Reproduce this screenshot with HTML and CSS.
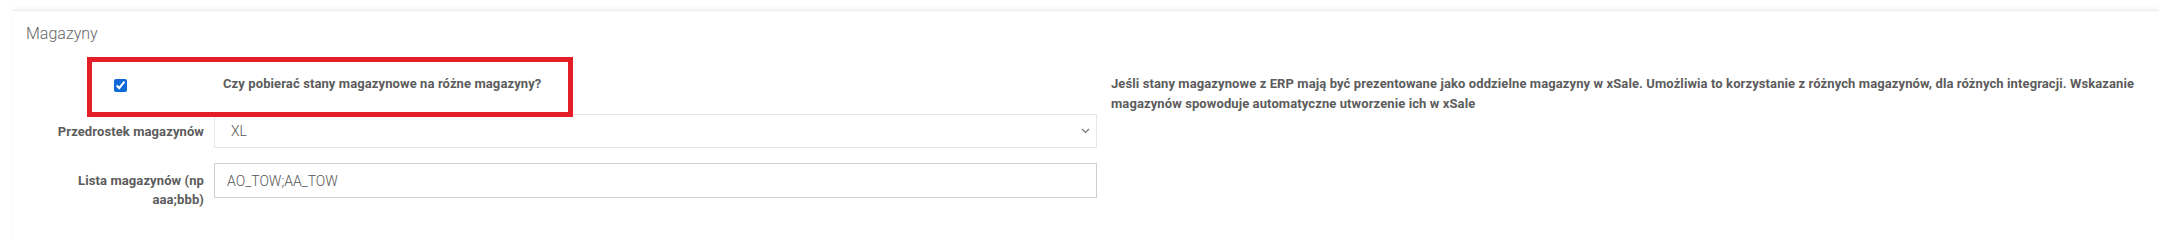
FILE: index.html
```
<!DOCTYPE html>
<html lang="pl">
<head>
  <meta charset="UTF-8">
  <meta name="viewport" content="width=device-width, initial-scale=1.0">
  <title>Magazyny</title>
  <link rel="stylesheet" href="styles.css">
</head>
<body>
  <div class="panel">
    <div class="panel-heading">Magazyny</div>

    <div class="form-row form-row-check">
      <div class="form-label">
        <input type="checkbox" id="multi-stock" checked>
      </div>
      <div class="form-field">
        <label class="check-label" for="multi-stock">Czy pobierać stany magazynowe na różne magazyny?</label>
      </div>
      <div class="form-help">
        Jeśli stany magazynowe z ERP mają być prezentowane jako oddzielne magazyny w xSale. Umożliwia to korzystanie z różnych magazynów, dla różnych integracji. Wskazanie magazynów spowoduje automatyczne utworzenie ich w xSale
      </div>
      <div class="highlight"></div>
    </div>

    <div class="form-row">
      <label class="form-label" for="prefix">Przedrostek magazynów</label>
      <div class="form-field">
        <div class="select">
          <span>XL</span>
          <svg width="9" height="6" viewBox="0 0 9 6"><path d="M1 1l3.5 3.5L8 1" fill="none" stroke="#777" stroke-width="1.2"/></svg>
        </div>
      </div>
    </div>

    <div class="form-row">
      <label class="form-label" for="list">Lista magazynów (np aaa;bbb)</label>
      <div class="form-field">
        <input type="text" id="list" class="text-input" value="AO_TOW;AA_TOW">
      </div>
    </div>
  </div>
</body>
</html>
```

FILE: styles.css
```
body {
  margin: 0;
  padding: 0;
  background-color: #fff;
  font-family: Roboto, 'Liberation Sans', sans-serif;
}

.panel {
  margin: 10px 0 0 12px;
  padding: 11px 0 20px 14px;
  border-top: 1px solid #ececec;
  box-shadow: 0 -3px 4px rgba(0, 0, 0, 0.03);
}

.panel-heading {
  font-size: 16px;
  line-height: 24px;
  font-weight: 300;
  color: #666;
  margin-bottom: 28px;
}

.form-row {
  display: grid;
  grid-template-columns: 188px 883px 1fr;
  align-items: start;
  margin-bottom: 15px;
}

.form-row-check {
  position: relative;
  margin-bottom: 0;
}

.form-label {
  padding: 8px 10px 0 14px;
  text-align: right;
  font-size: 13px;
  line-height: 19px;
  font-weight: 700;
  letter-spacing: 0.1px;
  color: #5c5c5c;
}

.form-row-check .form-label {
  padding: 5px 0 0;
  text-align: center;
}

.form-row-check input[type="checkbox"] {
  width: 13px;
  height: 13px;
  margin: 0;
  accent-color: #1169d8;
  display: block;
  margin-left: 88px;
}

.check-label {
  display: block;
  padding-left: 9px;
  font-size: 13px;
  line-height: 20px;
  font-weight: 700;
  letter-spacing: 0.1px;
  color: #5c5c5c;
}

.form-help {
  padding: 0 20px 0 14px;
  font-size: 13px;
  line-height: 20px;
  font-weight: 700;
  letter-spacing: 0.1px;
  color: #5c5c5c;
}

.highlight {
  position: absolute;
  left: 61px;
  top: -17px;
  width: 486px;
  height: 60px;
  box-sizing: border-box;
  border: 5px solid #e31e26;
  pointer-events: none;
}

.select {
  display: flex;
  justify-content: space-between;
  align-items: center;
  height: 34px;
  box-sizing: border-box;
  padding: 0 6px 0 16px;
  border: 1px solid #e6e6e6;
  font-size: 14px;
  font-weight: 300;
  color: #555;
}

.text-input {
  display: block;
  width: 100%;
  height: 35px;
  box-sizing: border-box;
  padding: 0 12px;
  border: 1px solid #cfcfcf;
  border-radius: 0;
  outline: none;
  font-family: Roboto, 'Liberation Sans', sans-serif;
  font-size: 14px;
  font-weight: 300;
  color: #555;
}
```
